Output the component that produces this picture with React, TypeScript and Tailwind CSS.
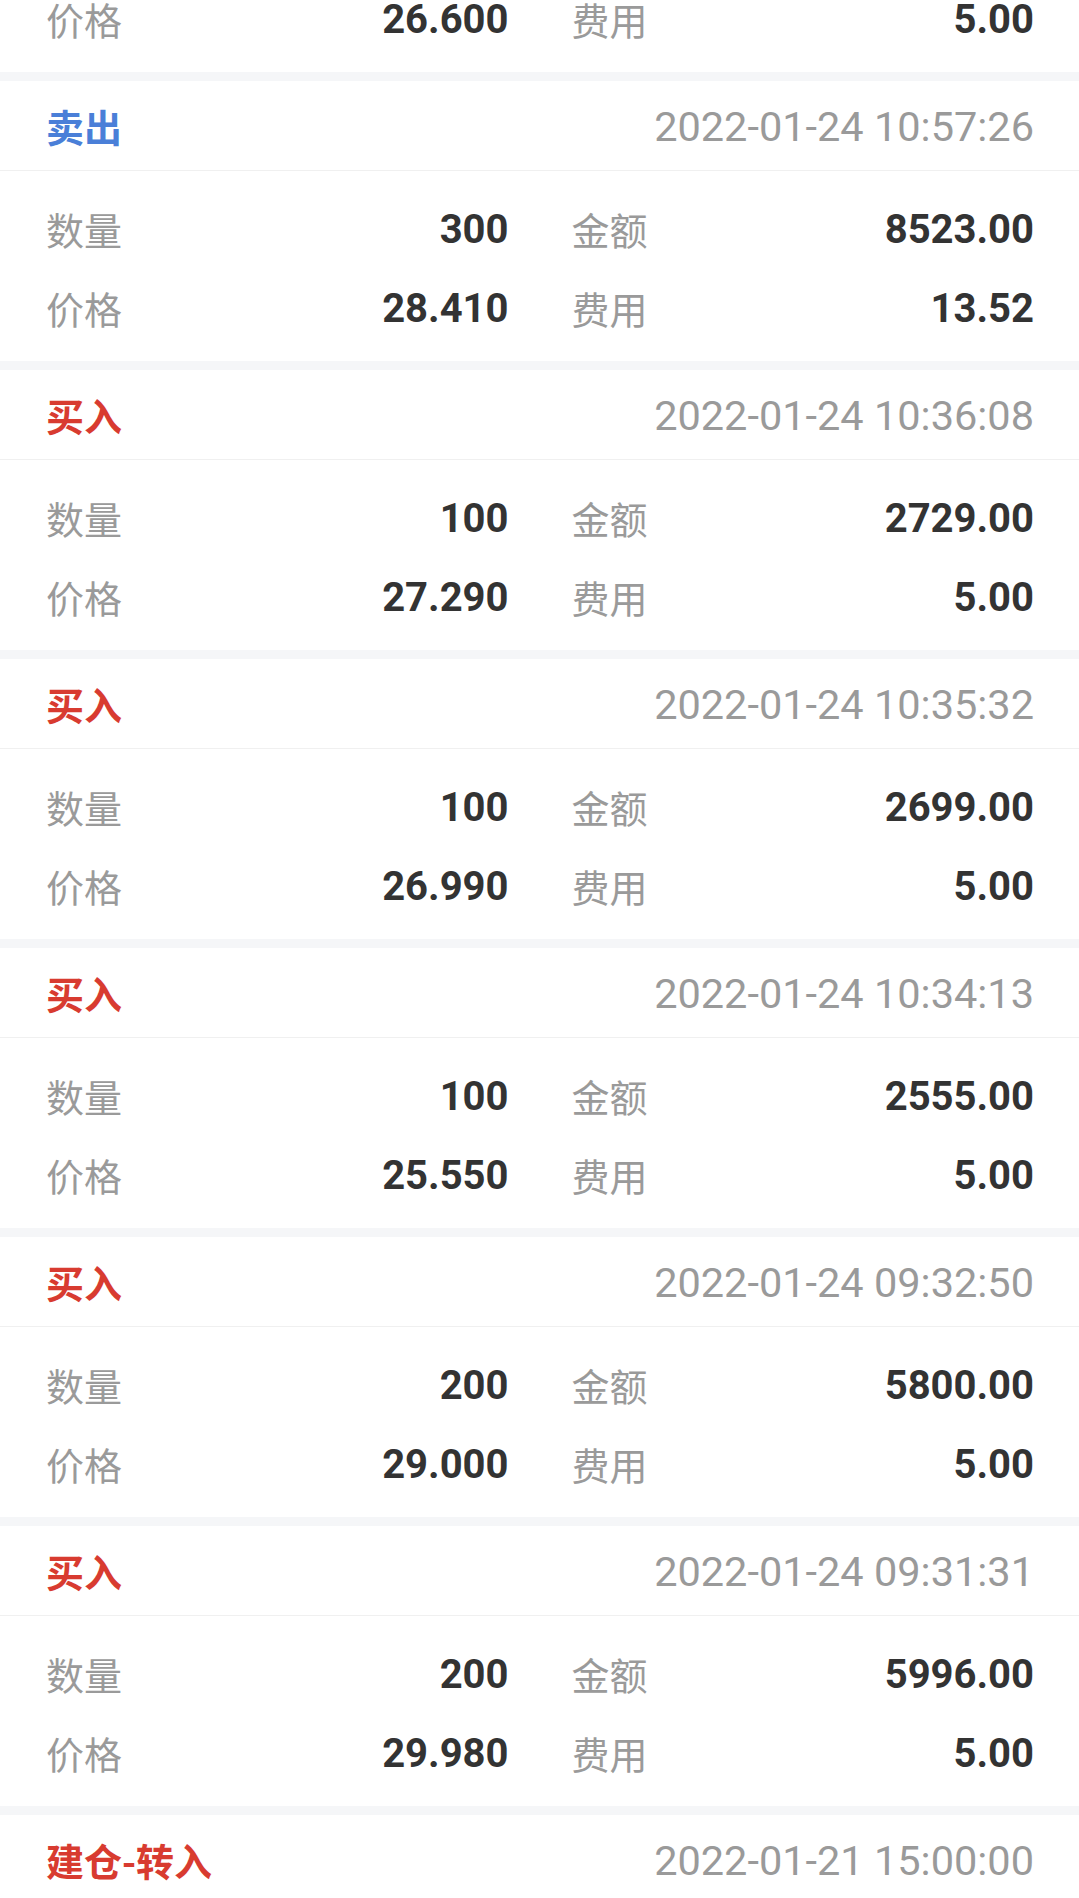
import React from 'react'

type Trade = {
  kind: string
  sell?: boolean
  time: string
  qty: string
  amount: string
  price: string
  fee: string
}

const trades: Trade[] = [
  { kind: '买入', time: '2022-01-24 10:58:10', qty: '100', amount: '2660.00', price: '26.600', fee: '5.00' },
  { kind: '卖出', sell: true, time: '2022-01-24 10:57:26', qty: '300', amount: '8523.00', price: '28.410', fee: '13.52' },
  { kind: '买入', time: '2022-01-24 10:36:08', qty: '100', amount: '2729.00', price: '27.290', fee: '5.00' },
  { kind: '买入', time: '2022-01-24 10:35:32', qty: '100', amount: '2699.00', price: '26.990', fee: '5.00' },
  { kind: '买入', time: '2022-01-24 10:34:13', qty: '100', amount: '2555.00', price: '25.550', fee: '5.00' },
  { kind: '买入', time: '2022-01-24 09:32:50', qty: '200', amount: '5800.00', price: '29.000', fee: '5.00' },
  { kind: '买入', time: '2022-01-24 09:31:31', qty: '200', amount: '5996.00', price: '29.980', fee: '5.00' },
  { kind: '建仓-转入', time: '2022-01-21 15:00:00', qty: '200', amount: '5600.00', price: '28.000', fee: '5.00' },
]

const cjk = "font-['Noto_Sans_CJK_SC',sans-serif]"
const num = "font-['Roboto','Noto_Sans_CJK_SC',sans-serif]"

function Cell({ label, value }: { label: string; value: string }) {
  return (
    <div className="flex items-center justify-between h-[79px]">
      <span className={`${cjk} text-[38px] leading-none text-[#9a9a9a]`}>{label}</span>
      <span className={`${num} text-[40px] leading-none font-bold text-[#333333] pt-[3px]`}>{value}</span>
    </div>
  )
}

function TradeCard({ t }: { t: Trade }) {
  return (
    <div className="bg-white">
      <div className="h-[90px] flex items-center justify-between pl-[46px] pr-[45px] border-b border-[#f0f0f0]">
        <span className={`${cjk} text-[38px] leading-none font-bold ${t.sell ? 'text-[#4a7fd8]' : 'text-[#d83b30]'}`}>
          {t.kind}
        </span>
        <span className={`${num} text-[41.5px] leading-none text-[#9a9a9a] pt-[3px]`}>{t.time}</span>
      </div>
      <div className="h-[190px] pl-[46px] pr-[45px] pt-[18px] grid grid-cols-2 gap-x-[63px] content-start">
        <Cell label="数量" value={t.qty} />
        <Cell label="金额" value={t.amount} />
        <Cell label="价格" value={t.price} />
        <Cell label="费用" value={t.fee} />
      </div>
    </div>
  )
}

export default function App() {
  return (
    <div className="w-[1079px] h-[1898px] overflow-hidden bg-[#f5f6f8]">
      <div className="-mt-[208px] flex flex-col gap-[9px]">
        {trades.map((t, i) => (
          <TradeCard key={i} t={t} />
        ))}
      </div>
    </div>
  )
}
